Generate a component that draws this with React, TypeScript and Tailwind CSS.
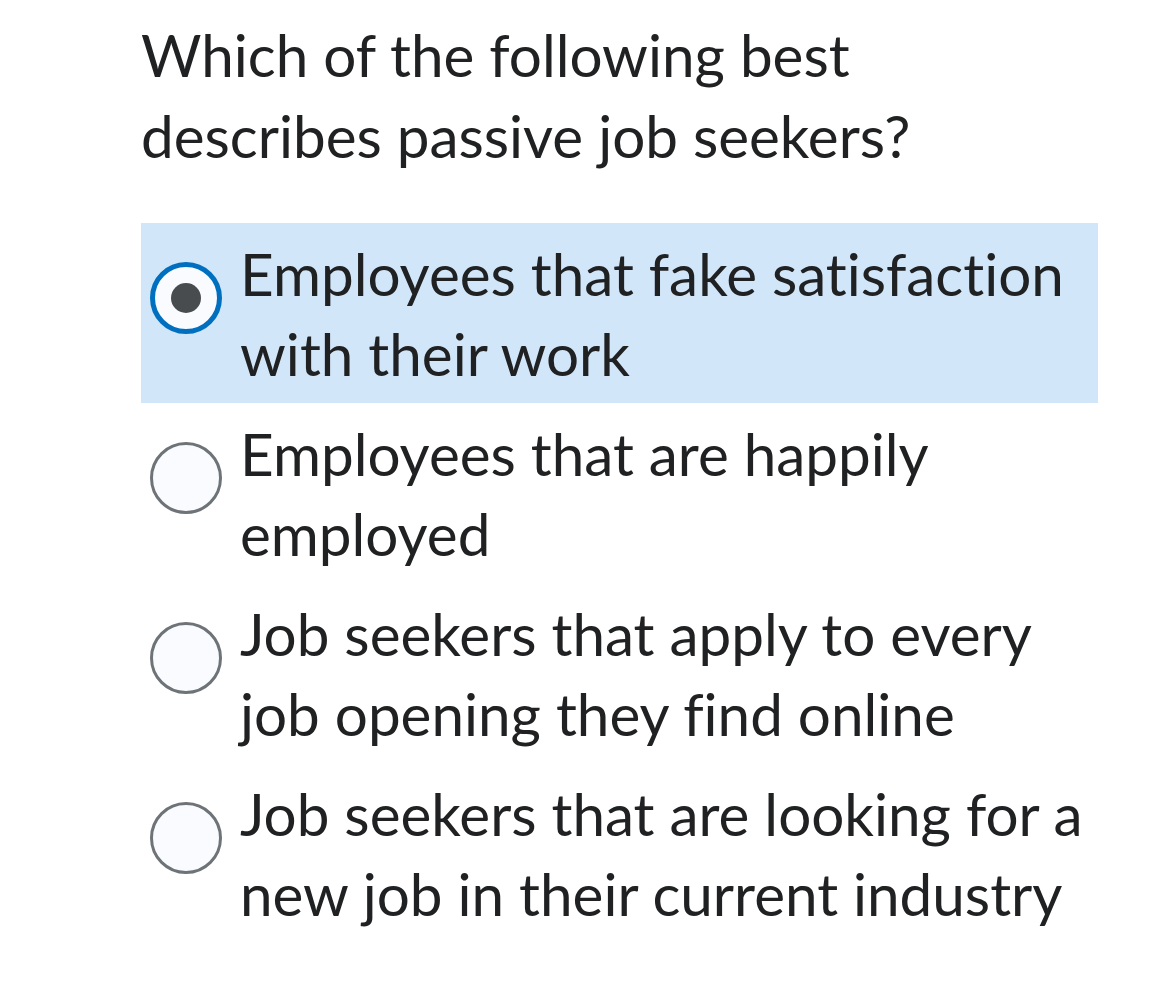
import React from "react";

const options = [
  "Employees that fake satisfaction with their work",
  "Employees that are happily employed",
  "Job seekers that apply to every job opening they find online",
  "Job seekers that are looking for a new job in their current industry",
];

function Radio({ checked }: { checked: boolean }) {
  if (checked) {
    return (
      <div className="w-[72px] h-[72px] rounded-full border-[5px] border-[#006fbf] bg-[#f9fbff] flex items-center justify-center shrink-0 mt-[29px]">
        <div className="w-[30px] h-[30px] rounded-full bg-[#494c4e]" />
      </div>
    );
  }
  return (
    <div className="w-[72px] h-[72px] rounded-full border-[3px] border-[#6e7377] bg-[#f9fbff] shrink-0 mt-[29px]" />
  );
}

export default function App() {
  const [selected, setSelected] = React.useState(0);

  return (
    <div className="min-h-screen w-full bg-white pl-[141px] pt-[14px] font-['Lato',sans-serif] text-[#202122] [font-variant-ligatures:none]">
      <h1 className="text-[58.4px] leading-[81px] font-normal w-[850px]">
        Which of the following best describes passive job seekers?
      </h1>

      <div className="mt-[47px] w-[957px] flex flex-col">
        {options.map((opt, i) => (
          <div
            key={i}
            onClick={() => setSelected(i)}
            className={`flex gap-[18px] pl-[9px] pr-[12px] py-[10px] cursor-pointer ${
              selected === i ? "bg-[#d2e6f9]" : "bg-white"
            }`}
          >
            <Radio checked={selected === i} />
            <p className="text-[58.4px] leading-[80px]">{opt}</p>
          </div>
        ))}
      </div>
    </div>
  );
}
